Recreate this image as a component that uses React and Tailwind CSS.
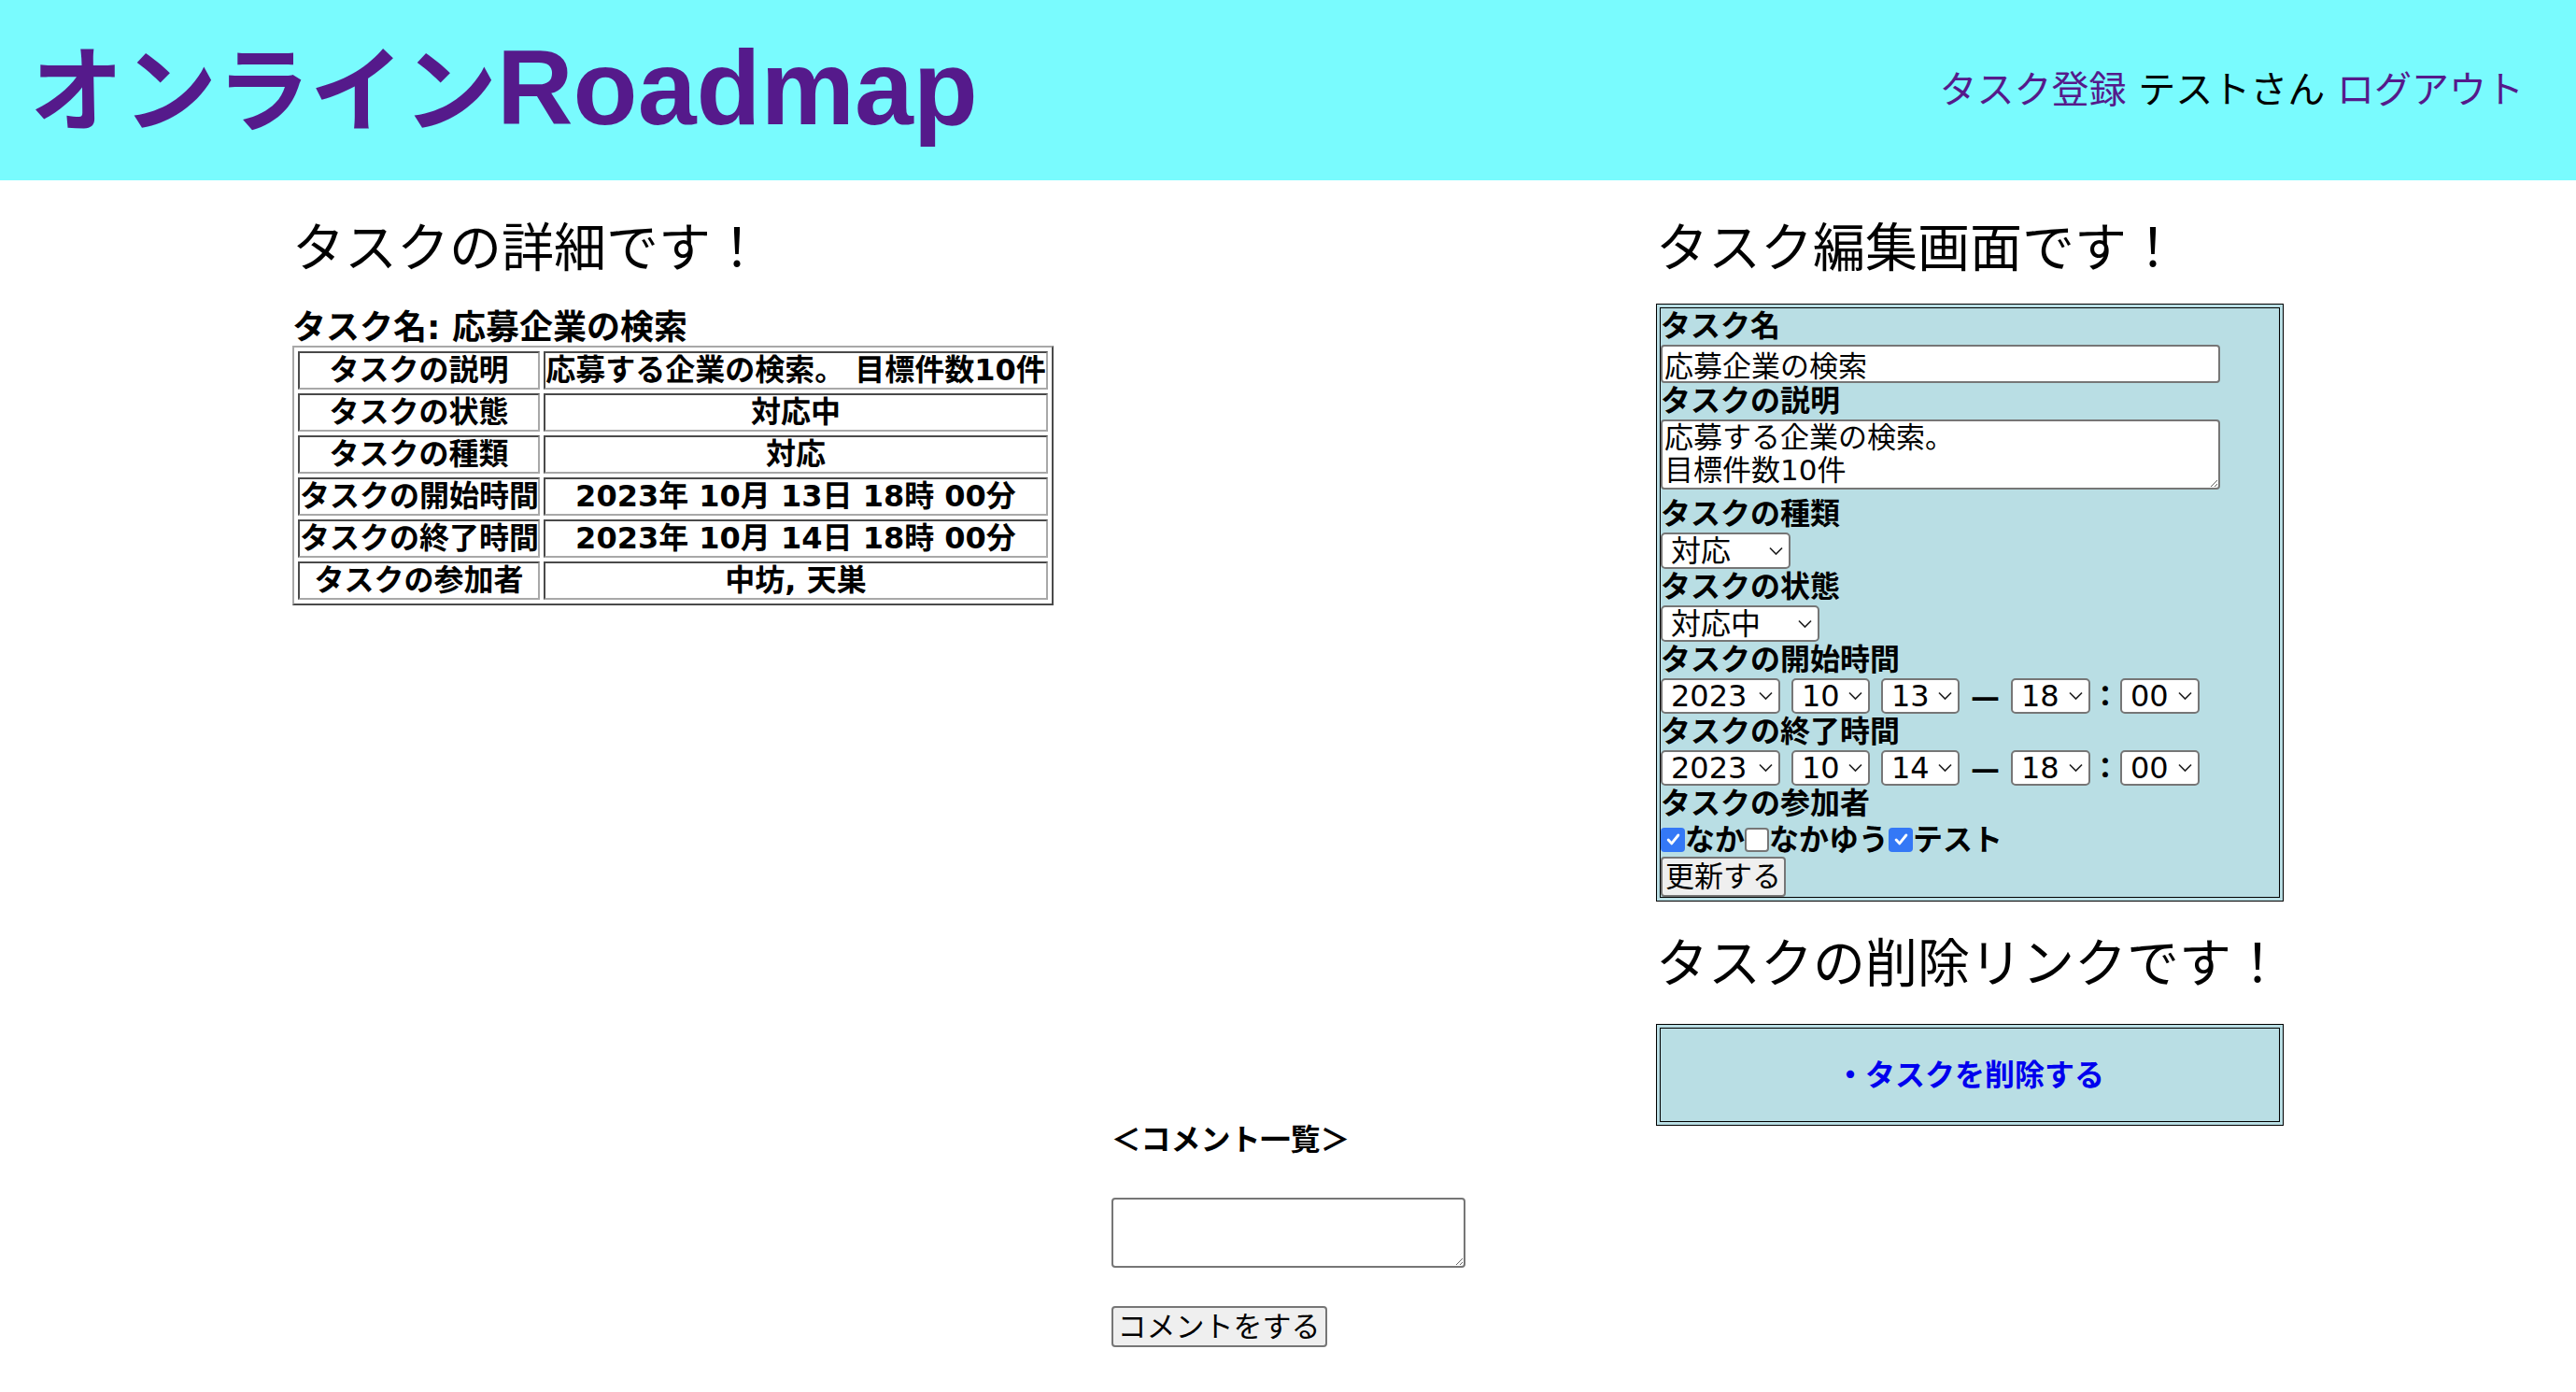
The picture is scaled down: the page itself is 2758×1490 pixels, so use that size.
import React from "react";

const Chevron = () => (
  <svg
    className="pointer-events-none absolute right-[8px] top-1/2 -translate-y-1/2"
    width="15"
    height="9"
    viewBox="0 0 15 9"
    fill="none"
  >
    <path d="M1 1l6.5 6.5 6.5-6.5" stroke="#222" strokeWidth="1.7" />
  </svg>
);

const Select = ({ value, className }) => (
  <span className={`relative inline-flex ${className}`}>
    <select
      defaultValue={value}
      className="h-full w-full appearance-none rounded-[5px] border-2 border-[#767676] bg-white pl-[9px] text-[32px] leading-none text-black outline-none"
    >
      <option>{value}</option>
    </select>
    <Chevron />
  </span>
);

const Check = ({ checked }) =>
  checked ? (
    <span className="flex h-[26px] w-[26px] items-center justify-center rounded-[4px] bg-[#3478f6]">
      <svg width="19" height="19" viewBox="0 0 16 16" fill="none">
        <path d="M3.5 8.5l3 3.2 6-7.5" stroke="white" strokeWidth="2.4" strokeLinecap="round" strokeLinejoin="round" />
      </svg>
    </span>
  ) : (
    <span className="h-[26px] w-[26px] rounded-[4px] border-2 border-[#767676] bg-white" />
  );

const Label = ({ children }) => <div className="text-[32px] font-bold leading-[39px]">{children}</div>;

const rows = [
  ["タスクの説明", "応募する企業の検索。 目標件数10件"],
  ["タスクの状態", "対応中"],
  ["タスクの種類", "対応"],
  ["タスクの開始時間", "2023年 10月 13日 18時 00分"],
  ["タスクの終了時間", "2023年 10月 14日 18時 00分"],
  ["タスクの参加者", "中坊, 天巣"],
];

const TimeRow = ({ day }) => (
  <div className="flex h-[38px] items-center">
    <Select value="2023" className="h-[38px] w-[128px]" />
    <Select value="10" className="ml-[12px] h-[38px] w-[84px]" />
    <Select value={day} className="ml-[12px] h-[38px] w-[84px]" />
    <span className="ml-[12px] w-[31px] text-center text-[31px] font-bold leading-none">—</span>
    <Select value="18" className="ml-[12px] h-[38px] w-[85px]" />
    <span className="w-[32px] text-center text-[31px] font-bold leading-none">：</span>
    <Select value="00" className="h-[38px] w-[85px]" />
  </div>
);

export default function App() {
  return (
    <div className="min-h-screen bg-white text-black font-['DejaVu_Sans','Noto_Sans_CJK_JP',sans-serif]">
      <header className="flex h-[193px] items-center justify-between bg-[#79fbfe] pb-[4px] pl-[32px] pr-[56px]">
        <h1 className="whitespace-nowrap text-[100px] font-bold leading-none text-[#551a8b]">
          オンライン<span className="font-['Liberation_Sans',sans-serif] text-[113px]">Roadmap</span>
        </h1>
        <nav className="whitespace-nowrap pt-[2px] text-[40px] leading-none">
          <a href="#" className="text-[#551a8b]">タスク登録</a> テストさん{" "}
          <a href="#" className="text-[#551a8b]">ログアウト</a>
        </nav>
      </header>

      <main className="flex items-start justify-between px-[313px] pt-[39px]">
        <div className="flex flex-col items-start">
          <h2 className="text-[56px] font-normal leading-[67px]">タスクの詳細です！</h2>
          <p className="mt-[33px] text-[36px] font-bold leading-[38px]">タスク名: 応募企業の検索</p>
          <table className="w-[815px] table-fixed border-separate border-spacing-[4px] border-2 border-t-[#a8a8a8] border-l-[#a8a8a8] border-b-[#4a4a4a] border-r-[#4a4a4a]">
            <tbody>
              {rows.map(([k, v]) => (
                <tr key={k}>
                  <td className="h-[41px] w-[259px] whitespace-nowrap border-2 border-t-[#4a4a4a] border-l-[#4a4a4a] border-b-[#a8a8a8] border-r-[#a8a8a8] p-0 text-center text-[32px] font-bold leading-[37px]">
                    {k}
                  </td>
                  <td className="h-[41px] whitespace-nowrap border-2 border-t-[#4a4a4a] border-l-[#4a4a4a] border-b-[#a8a8a8] border-r-[#a8a8a8] p-0 text-center text-[32px] font-bold leading-[37px]">
                    {v}
                  </td>
                </tr>
              ))}
            </tbody>
          </table>
        </div>

        <div className="flex w-[672px] flex-col">
          <h2 className="text-[56px] font-normal leading-[67px]">タスク編集画面です！</h2>
          <div className="mt-[26px] border border-black bg-[#b9dee4] p-[3px]">
            <form className="flex flex-col items-start border border-black">
              <Label>タスク名</Label>
              <input
                defaultValue="応募企業の検索"
                className="h-[41px] w-[599px] rounded-[4px] border-2 border-[#767676] bg-white px-[2px] text-[31px] leading-none outline-none"
              />
              <Label>タスクの説明</Label>
              <textarea
                defaultValue={"応募する企業の検索。\n目標件数10件"}
                className="mb-[7px] h-[75px] w-[599px] rounded-[4px] border-2 border-[#767676] bg-white px-[2px] text-[31px] leading-[35px] outline-none"
              />
              <Label>タスクの種類</Label>
              <Select value="対応" className="h-[39px] w-[139px]" />
              <Label>タスクの状態</Label>
              <Select value="対応中" className="h-[39px] w-[170px]" />
              <Label>タスクの開始時間</Label>
              <TimeRow day="13" />
              <Label>タスクの終了時間</Label>
              <TimeRow day="14" />
              <Label>タスクの参加者</Label>
              <div className="flex h-[37px] items-center text-[32px] font-bold leading-none">
                <Check checked />
                <span>なか</span>
                <Check />
                <span>なかゆう</span>
                <Check checked />
                <span>テスト</span>
              </div>
              <button
                type="button"
                className="h-[43px] rounded-[4px] border-2 border-[#767676] bg-[#efefef] px-[3px] text-[31px] leading-none"
              >
                更新する
              </button>
            </form>
          </div>

          <h2 className="mt-[33px] text-[56px] font-normal leading-[67px]">タスクの削除リンクです！</h2>
          <div className="mt-[31px] border border-black bg-[#b9dee4] p-[3px]">
            <div className="flex h-[101px] items-center justify-center border border-black">
              <a href="#" className="text-[32px] font-bold leading-none text-[#0000ee]">
                ・タスクを削除する
              </a>
            </div>
          </div>
        </div>
      </main>

      <section className="mx-auto flex w-[379px] flex-col items-start pb-[48px]">
        <h3 className="text-[32px] font-bold leading-[30px]">＜コメント一覧＞</h3>
        <textarea className="mt-[47px] h-[75px] w-[379px] rounded-[4px] border-2 border-[#767676] bg-white text-[31px] outline-none" />
        <button
          type="button"
          className="mt-[41px] h-[44px] rounded-[4px] border-2 border-[#767676] bg-[#efefef] px-[5px] text-[31px] leading-none"
        >
          コメントをする
        </button>
      </section>
    </div>
  );
}
